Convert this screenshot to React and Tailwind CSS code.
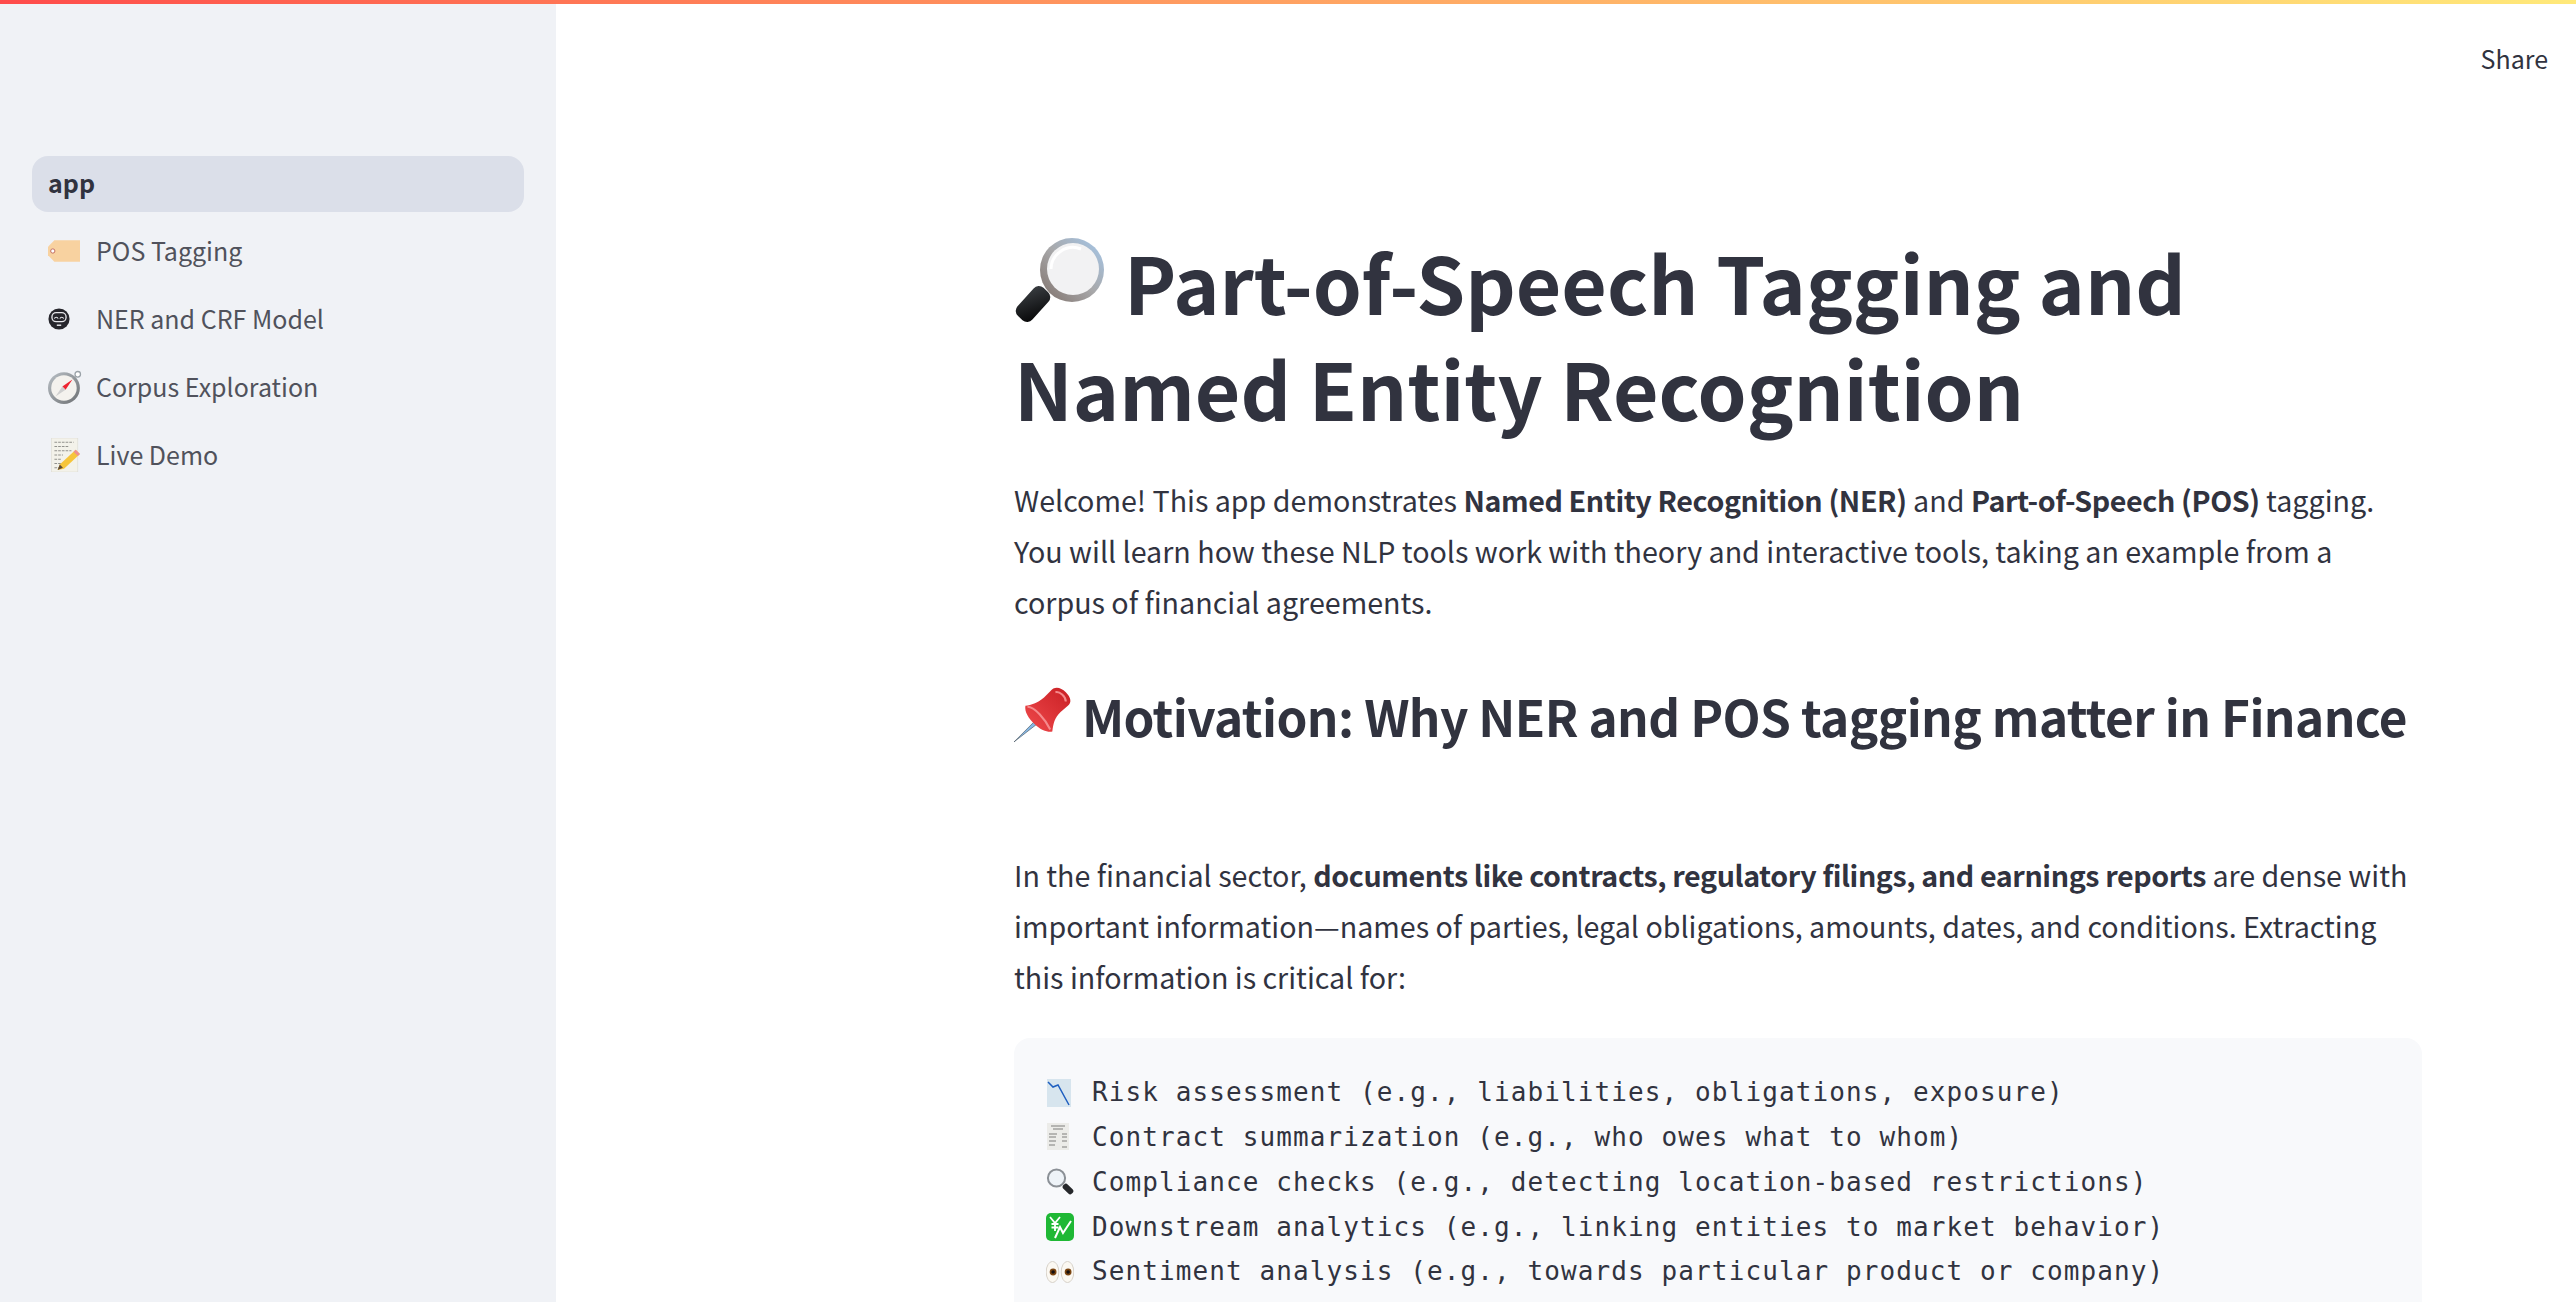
import React from "react";

const sans = "font-['Noto_Sans_CJK_SC','Noto_Sans',sans-serif]";

const TagIcon = () => (
  <svg width="32" height="22" viewBox="0 0 30 20">
    <path d="M6 0H30V20H6L0 14V6Z" fill="#f8d2a0" />
    <circle cx="4.5" cy="10" r="2" fill="#fff" stroke="#c0685a" strokeWidth="0.9" />
  </svg>
);

const FaceIcon = () => (
  <svg width="22" height="22" viewBox="0 0 20 20">
    <circle cx="10" cy="10" r="9.6" fill="#26262c" />
    <rect x="3" y="3.6" width="14" height="9.4" rx="4.4" fill="#e8e8ec" />
    <rect x="4.2" y="4.8" width="11.6" height="7" rx="3.2" fill="#26262c" />
    <path d="M5.8 9.6a1.8 1.8 0 0 1 3.4 0M10.8 9.6a1.8 1.8 0 0 1 3.4 0" fill="none" stroke="#e8e8ec" strokeWidth="1" />
    <rect x="8" y="15" width="4" height="1.3" fill="#e8e8ec" />
  </svg>
);

const CompassIcon = () => (
  <svg width="34" height="34" viewBox="0 0 32 32">
    <defs>
      <linearGradient id="compassRim" x1="0" y1="0" x2="1" y2="1">
        <stop offset="0" stopColor="#b9c0c6" />
        <stop offset="1" stopColor="#6d7073" />
      </linearGradient>
    </defs>
    <circle cx="28" cy="4" r="2.6" fill="#fff" stroke="#9aa2a8" strokeWidth="1.2" />
    <circle cx="15" cy="17" r="15" fill="url(#compassRim)" />
    <circle cx="15" cy="17" r="12" fill="#f4f2ee" />
    <path d="M23 9L13.5 15.5L16.5 18.5Z" fill="#ee2430" />
    <path d="M7 25L13.5 15.5L16.5 18.5Z" fill="#cfcfcf" />
  </svg>
);

const MemoIcon = () => (
  <svg width="32" height="34" viewBox="0 0 30 32">
    <rect x="3" y="0" width="25" height="32" fill="#f3f2ea" stroke="#d8d7cf" strokeWidth="0.5" />
    <path d="M6 4h18M6 8h14M6 12h16M6 16h8M6 20h7M6 24h8M6 28h6" stroke="#8d8d88" strokeWidth="0.9" strokeDasharray="2.5 1" />
    <path d="M26 11L30 15L15 29L9 30L11 25Z" fill="#f6c53a" />
    <path d="M26 11L30 15L28 17L24 13Z" fill="#ef8f8f" />
    <path d="M9 30L11 25L14 28Z" fill="#5d4a38" />
  </svg>
);

const BigLens = () => (
  <svg width="92" height="90" viewBox="0 0 92 90">
    <defs>
      <linearGradient id="lensRim" x1="1" y1="0" x2="0" y2="1">
        <stop offset="0" stopColor="#a5c8ec" />
        <stop offset="0.5" stopColor="#a8a8aa" />
        <stop offset="1" stopColor="#7d6f68" />
      </linearGradient>
      <linearGradient id="lensGrip" x1="0" y1="0" x2="1" y2="1">
        <stop offset="0" stopColor="#3b3f43" />
        <stop offset="1" stopColor="#050506" />
      </linearGradient>
    </defs>
    <rect x="9" y="47" width="20" height="38" rx="7" transform="rotate(42 19 66)" fill="url(#lensGrip)" />
    <circle cx="58" cy="32" r="32" fill="url(#lensRim)" />
    <circle cx="59" cy="31" r="26" fill="#f2f2f3" />
    <path d="M37 31a22 22 0 0 1 30-20" fill="none" stroke="#fff" strokeWidth="3" />
  </svg>
);

const PinIcon = () => (
  <svg width="58" height="58" viewBox="0 0 56 56">
    <defs>
      <linearGradient id="pinBody" x1="0" y1="1" x2="1" y2="0">
        <stop offset="0" stopColor="#f04a4c" />
        <stop offset="1" stopColor="#c91f24" />
      </linearGradient>
    </defs>
    <path d="M0 54L24 30L27 33Z" fill="#86b8e4" stroke="#44505c" strokeWidth="0.6" />
    <path d="M11 19C17 18 22 17 29 11L35 5C39 0 45 1 50 6C55 11 56 16 52 19L45 25C39 31 38 36 37 44C33 45 26 43 20 37C14 31 10 25 11 19Z" fill="url(#pinBody)" />
    <path d="M13 20C20 20 30 32 35 42" fill="none" stroke="#f58a8c" strokeWidth="2" />
    <path d="M40 6C44 5 50 10 50 15" fill="none" stroke="#f58a8c" strokeWidth="2" />
  </svg>
);

const ChartDown = () => (
  <svg width="26" height="28" viewBox="0 0 26 28">
    <rect width="24" height="28" x="1" fill="#d7e5ee" />
    <path d="M2 3L7 8L12 6L23 26" fill="none" stroke="#1f5fc0" strokeWidth="1.5" />
  </svg>
);

const Receipt = () => (
  <svg width="24" height="28" viewBox="0 0 24 28">
    <rect width="22" height="27" x="1" fill="#ecece9" />
    <path d="M5 3h14M7 6h10M3 11h8M16 11h5M3 14h7M16 14h5M3 18h7M16 18h5M3 22h6M16 24h5" stroke="#7f7f7c" strokeWidth="1" />
  </svg>
);

const SmallLens = () => (
  <svg width="28" height="28" viewBox="0 0 28 28">
    <rect x="16" y="18" width="12" height="6" rx="2.5" transform="rotate(45 22 21)" fill="#26282b" />
    <circle cx="10.5" cy="10" r="8.6" fill="#eef3f8" stroke="#8b9096" strokeWidth="2" />
  </svg>
);

const YenChart = () => (
  <svg width="28" height="28" viewBox="0 0 28 28">
    <rect width="28" height="28" rx="5" fill="#1fb835" />
    <path d="M4 4L9 10L14 4M9 10V18M5.5 11H12.5M5.5 14.5H12.5" fill="none" stroke="#fff" strokeWidth="1.8" />
    <path d="M9 25L14 14L17 20L25 8" fill="none" stroke="#fff" strokeWidth="2" />
  </svg>
);

const Eyes = () => (
  <svg width="28" height="22" viewBox="0 0 28 22">
    {[6.5, 21.5].map((cx) => (
      <g key={cx}>
        <ellipse cx={cx} cy="11" rx="6.3" ry="10.6" fill="#fbf8f2" stroke="#c9c2b6" strokeWidth="0.7" />
        <circle cx={cx + 0.6} cy="11" r="3.4" fill="#7a4410" />
        <circle cx={cx + 0.6} cy="11" r="1.8" fill="#151010" />
      </g>
    ))}
  </svg>
);

const navItems = [
  { label: "POS Tagging", icon: <TagIcon /> },
  { label: "NER and CRF Model", icon: <FaceIcon /> },
  { label: "Corpus Exploration", icon: <CompassIcon /> },
  { label: "Live Demo", icon: <MemoIcon /> },
];

const codeLines = [
  { icon: <ChartDown />, text: "Risk assessment (e.g., liabilities, obligations, exposure)" },
  { icon: <Receipt />, text: "Contract summarization (e.g., who owes what to whom)" },
  { icon: <SmallLens />, text: "Compliance checks (e.g., detecting location-based restrictions)" },
  { icon: <YenChart />, text: "Downstream analytics (e.g., linking entities to market behavior)" },
  { icon: <Eyes />, text: "Sentiment analysis (e.g., towards particular product or company)" },
];

const Strong = ({ children }) => <b className="tracking-[-0.4px]">{children}</b>;

const Sidebar = () => (
  <aside className="w-[556px] shrink-0 bg-[#f0f2f6] pt-[156px] pl-[32px] pr-[32px]">
    <div className="h-14 rounded-2xl bg-[#dbdfe9] flex items-center px-4 pb-[2px] text-[25px] font-bold text-[#31333f]">
      app
    </div>
    <nav className="mt-3 flex flex-col gap-3">
      {navItems.map((item) => (
        <div key={item.label} className="h-14 flex items-center px-4 pb-[2px] text-[25px] text-[#50525c]">
          <span className="w-12 shrink-0 flex items-center">{item.icon}</span>
          {item.label}
        </div>
      ))}
    </nav>
  </aside>
);

export default function App() {
  return (
    <div className={`relative flex h-[1302px] overflow-hidden bg-white text-[#31333f] ${sans}`}>
      <div className="absolute top-0 inset-x-0 h-1 bg-gradient-to-r from-[#ff4b4b] to-[#ffe97a]" />
      <Sidebar />
      <main className="flex-1 relative">
        <div className="absolute top-[36px] right-[28px] text-[25px] leading-[44px]">Share</div>
        <div className="ml-[458px] w-[1408px] pt-[228px]">
          <h1 className="text-[78.5px] leading-[106px] font-bold">
            <span className="inline-block align-[-13px] mr-[18px]"><BigLens /></span>
            Part-of-Speech Tagging and
            <br />
            Named Entity Recognition
          </h1>
          <p className="mt-[34px] text-[28.65px] leading-[51.2px]">
            Welcome! This app demonstrates <Strong>Named Entity Recognition (NER)</Strong> and{" "}
            <Strong>Part-of-Speech (POS)</Strong> tagging. You will learn how these NLP tools work with theory and
            interactive tools, taking an example from a corpus of financial agreements.
          </p>
          <h3 className="mt-[53px] text-[49.5px] tracking-[-0.6px] leading-[70px] font-semibold whitespace-nowrap">
            <span className="inline-block align-[-7px] mr-[10px]"><PinIcon /></span>
            Motivation: Why NER and POS tagging matter in Finance
          </h3>
          <p className="mt-[98px] text-[28.65px] leading-[51.2px]">
            In the financial sector, <Strong>documents like contracts, regulatory filings, and earnings reports</Strong>{" "}
            are dense with important information—names of parties, legal obligations, amounts, dates, and conditions.
            Extracting this information is critical for:
          </p>
          <div className="mt-[36px] h-[400px] rounded-2xl bg-[#f8f9fb] pt-[32px] pl-[32px] text-[26px] tracking-[1.1px] leading-[44.8px] font-['DejaVu_Sans_Mono',monospace]">
            {codeLines.map((line) => (
              <div key={line.text} className="flex items-center whitespace-pre">
                <span className="w-[46px] shrink-0 flex items-center">{line.icon}</span>
                {line.text}
              </div>
            ))}
          </div>
        </div>
      </main>
    </div>
  );
}
